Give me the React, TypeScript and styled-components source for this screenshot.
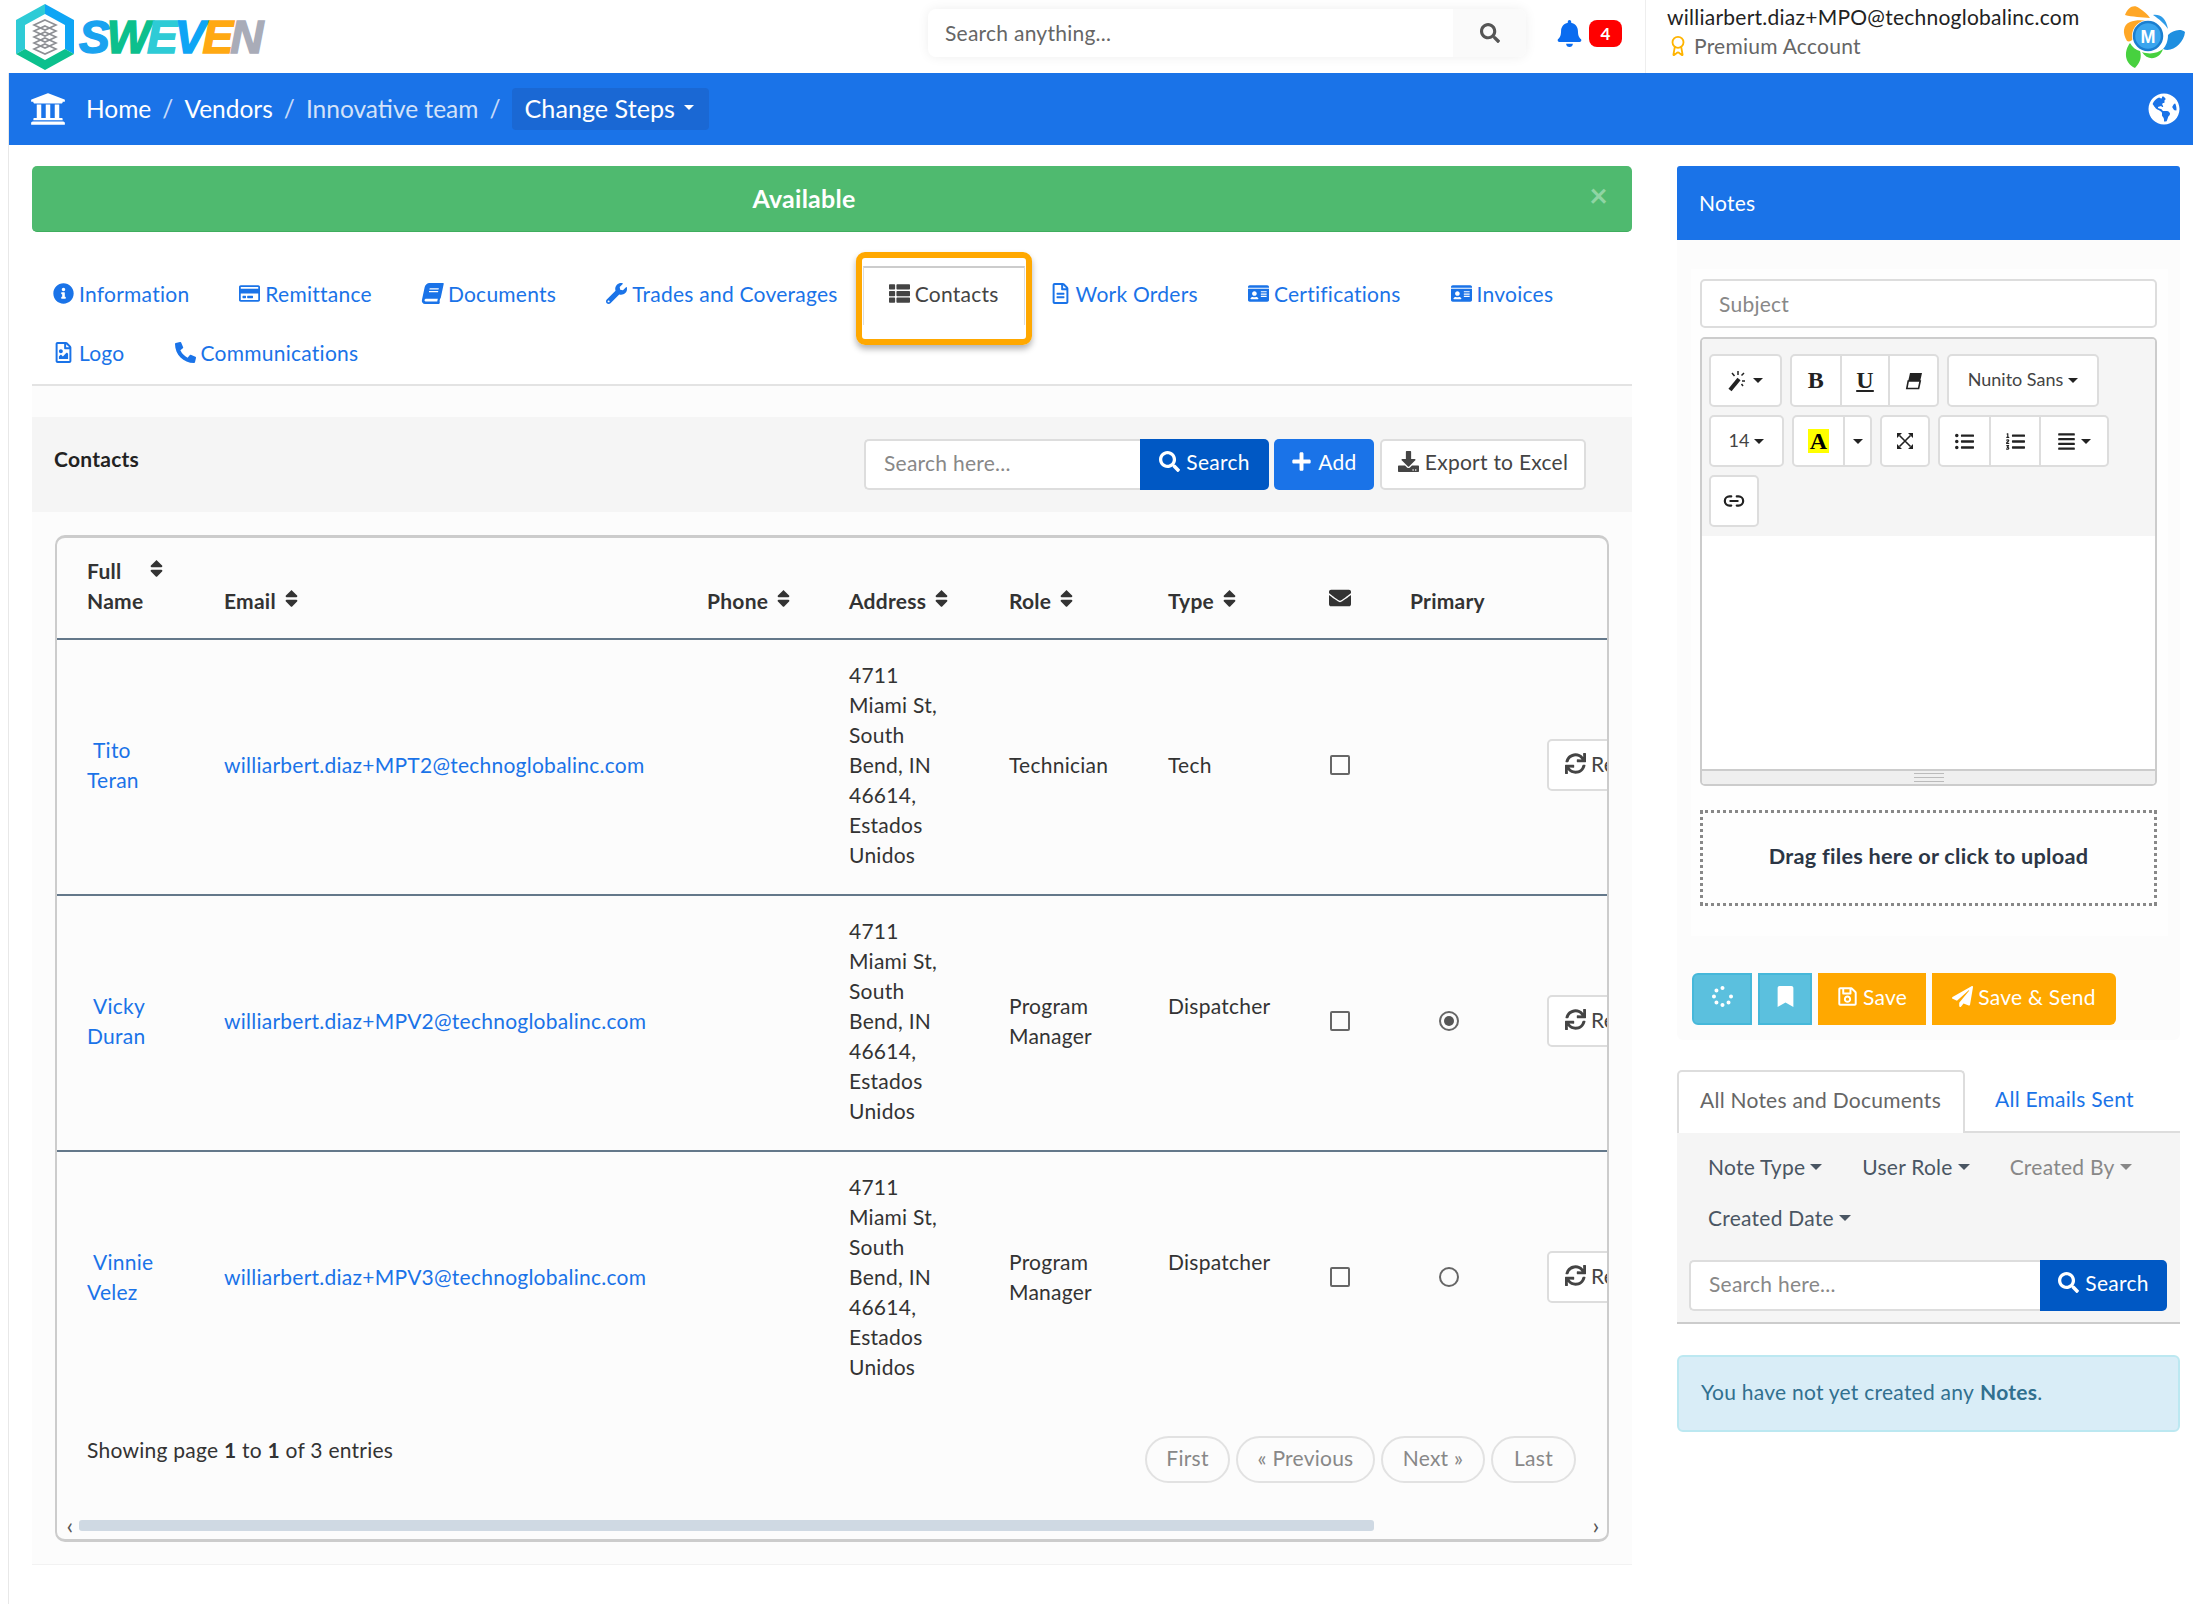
import React from 'react';
import styled, { createGlobalStyle } from 'styled-components';
import {
  FaAlignJustify,
  FaBell,
  FaBook,
  FaBookmark,
  FaDownload,
  FaEnvelope,
  FaGlobeAmericas,
  FaIdCard,
  FaInfoCircle,
  FaListOl,
  FaListUl,
  FaPaperPlane,
  FaPhoneAlt,
  FaPlus,
  FaRegCreditCard,
  FaRegFileAlt,
  FaRegFileImage,
  FaRegSave,
  FaSearch,
  FaSort,
  FaSpinner,
  FaSync,
  FaThList,
  FaUniversity,
  FaWrench,
} from 'react-icons/fa';
import { Award, Link2 } from 'lucide-react';

const BLUE = '#1a73e8';
const DARK_BLUE = '#0058c4';
const ORANGE = '#ffa800';

const GlobalStyle = createGlobalStyle`
  html, body {
    margin: 0;
    background: #fff;
    overflow: hidden;
  }
  body {
    font-family: Lato, "Noto Sans", sans-serif;
    font-size: 21px;
    letter-spacing: 0.25px;
    color: #333;
  }
  button { letter-spacing: inherit; }
  * { box-sizing: border-box; }
`;

const Page = styled.div`
  width: 2195px;
  height: 1604px;
`;

/* top header */
const Header = styled.header`
  display: flex;
  align-items: stretch;
  height: 73px;
`;

const Brand = styled.div`
  display: flex;
  align-items: center;
  gap: 5px;
  padding-left: 16px;
`;

const BrandWord = styled.div`
  display: flex;
  font-family: "Liberation Sans", sans-serif;
  font-weight: 700;
  font-style: italic;
  font-size: 46px;
  line-height: 1;
  letter-spacing: -3px;
  -webkit-text-stroke: 1.5px currentColor;
`;

const BrandLetter = styled.span<{ $color: string }>`
  color: ${(p) => p.$color};
`;

const SearchAnything = styled.div`
  display: flex;
  align-items: center;
  width: 598px;
  height: 48px;
  margin: 9px 0 0 auto;
  border-radius: 8px;
  box-shadow: 0 0 12px rgba(0, 0, 0, 0.07);
  overflow: hidden;
`;

const SearchAnythingText = styled.div`
  flex: 1;
  padding: 0 0 2px 17px;
  color: #666;
`;

const SearchAnythingIcon = styled.div`
  display: flex;
  align-items: center;
  justify-content: center;
  width: 73px;
  height: 100%;
  background: #fafafa;
  color: #555;
  font-size: 20px;
`;

const Notifications = styled.div`
  display: flex;
  align-items: center;
  gap: 6px;
  width: 119px;
  padding: 0 0 6px 30px;
  color: #0a6cf0;
  font-size: 27px;
`;

const CountBadge = styled.span`
  display: inline-flex;
  align-items: center;
  justify-content: center;
  width: 33px;
  height: 27px;
  border-radius: 8px;
  background: #f00;
  color: #fff;
  font-size: 17px;
  font-weight: 700;
`;

const UserArea = styled.div`
  display: flex;
  flex: none;
  justify-content: space-between;
  align-items: center;
  width: 550px;
  padding: 0 9px 0 21px;
  border-left: 1px solid #eee;
`;

const UserInfo = styled.div`
  padding-bottom: 10px;
`;

const UserEmail = styled.div`
  line-height: 28px;
  color: #222;
`;

const UserPlan = styled.div`
  display: flex;
  align-items: center;
  gap: 5px;
  line-height: 30px;
  color: #666;

  svg {
    color: #ffb400;
  }
`;

/* page body */
const Shell = styled.div`
  margin-left: 8px;
  height: 1531px;
  border-left: 1px solid #e8e8e8;
`;

const Crumbs = styled.nav`
  display: flex;
  align-items: center;
  height: 72px;
  margin-right: 2px;
  padding: 0 13px 0 21px;
  background: ${BLUE};
  color: #fff;
  font-size: 24.5px;
  letter-spacing: 0;
`;

const CrumbHomeIcon = styled.span`
  display: flex;
  margin-right: 20px;
  font-size: 36px;
`;

const Crumb = styled.span<{ $muted?: boolean }>`
  padding-bottom: 2px;
  color: ${(p) => (p.$muted ? '#d3e2f9' : '#fff')};
`;

const CrumbSlash = styled.span`
  margin: 0 11px;
  padding-bottom: 2px;
  color: #c6dafa;
`;

const StepsButton = styled.button`
  display: flex;
  align-items: center;
  gap: 9px;
  width: 197px;
  height: 42px;
  padding: 0 0 3px 13px;
  border: 0;
  border-radius: 4px;
  background: #1a68d4;
  color: #fff;
  font: inherit;
  font-size: 25.2px;
`;

const GlobeIcon = styled.span`
  display: flex;
  margin-left: auto;
  font-size: 32px;
`;

const Caret = styled.i<{ $size?: number }>`
  display: inline-block;
  flex: none;
  border-style: solid;
  border-color: currentColor transparent transparent;
  border-width: ${(p) => p.$size ?? 5}px ${(p) => p.$size ?? 5}px 0;
`;

const Content = styled.div`
  display: grid;
  grid-template-columns: 1600px 503px;
  column-gap: 45px;
  padding: 21px 0 0 23px;
`;

const MainColumn = styled.main``;

const StatusBanner = styled.div`
  position: relative;
  display: flex;
  align-items: center;
  justify-content: center;
  height: 66px;
  padding: 0 56px 2px 0;
  border-bottom: 1px solid #3fae5e;
  border-radius: 5px;
  background: #4fba6f;
  color: #fff;
  font-size: 25px;
  font-weight: 700;
`;

const BannerClose = styled.span`
  position: absolute;
  top: 13px;
  right: 24px;
  color: #8fd5a4;
  font-size: 32px;
  font-weight: 700;
  line-height: 1;
`;

const TabStrip = styled.div`
  display: flex;
  flex-wrap: wrap;
  padding: 34px 0 0;
  border-bottom: 2px solid #e3e3e3;
`;

const TabRowShift = styled.div`
  display: flex;
  flex-wrap: wrap;
  margin-left: -4px;
`;

const TabLink = styled.a<{ $active?: boolean }>`
  position: relative;
  display: flex;
  align-items: center;
  gap: 5px;
  height: 59px;
  padding: 0 25px 5px;
  color: ${(p) => (p.$active ? '#444' : BLUE)};
  white-space: nowrap;

  ${(p) =>
    p.$active &&
    `
    padding-bottom: 7px;
    border-top: 2px solid #ccc;
    border-left: 1px solid #ddd;
    border-right: 1px solid #ddd;
    &::after {
      content: '';
      position: absolute;
      inset: -16px -8px -20px -8px;
      border: 6px solid ${ORANGE};
      border-radius: 9px;
      box-shadow: 0 4px 6px rgba(0, 0, 0, 0.3);
    }
  `}
`;

const SlantedBook = styled(FaBook)`
  transform: skewX(-12deg);
`;

const ContactsCard = styled.section`
  height: 1179px;
  padding-top: 31px;
  background: #fcfcfc;
  border-bottom: 1px solid #f2f2f2;
`;

const ContactsHead = styled.div`
  display: flex;
  align-items: center;
  height: 95px;
  padding: 0 46px 0 22px;
  background: #f5f5f5;
`;

const ContactsTitle = styled.h2`
  margin: -12px auto 0 0;
  color: #222;
  font-size: 21px;
  font-weight: 700;
`;

const SearchField = styled.div<{ $width: number }>`
  display: flex;
  align-items: center;
  width: ${(p) => p.$width}px;
  height: 51px;
  padding: 0 0 5px 18px;
  border: 2px solid #ddd;
  border-right: 0;
  border-radius: 5px 0 0 5px;
  background: #fff;
  color: #888;
`;

const ActionButton = styled.button<{ $tone: 'dark' | 'blue' | 'plain'; $width: number; $gapLeft?: number }>`
  display: inline-flex;
  align-items: center;
  justify-content: center;
  gap: 6px;
  width: ${(p) => p.$width}px;
  height: 51px;
  margin-left: ${(p) => p.$gapLeft ?? 0}px;
  padding: 0 0 6px;
  border: ${(p) => (p.$tone === 'plain' ? '2px solid #ddd' : '0')};
  border-radius: ${(p) => (p.$tone === 'dark' ? '0 5px 5px 0' : '5px')};
  background: ${(p) => (p.$tone === 'dark' ? DARK_BLUE : p.$tone === 'blue' ? BLUE : '#fff')};
  color: ${(p) => (p.$tone === 'plain' ? '#444' : '#fff')};
  font: inherit;
`;

const TableBox = styled.div`
  height: 1007px;
  margin: 23px 23px 0 23px;
  border: 2px solid #ccc;
  border-top-width: 3px;
  border-bottom-width: 3px;
  border-radius: 10px;
  overflow: hidden;
`;

const Contacts = styled.table`
  width: 1690px;
  table-layout: fixed;
  border-collapse: collapse;
`;

const Column = styled.col<{ $width: number }>`
  width: ${(p) => p.$width}px;
`;

const HeadCell = styled.th<{ $pad?: number; $center?: boolean }>`
  height: 101px;
  padding: 0 0 22px ${(p) => p.$pad ?? 0}px;
  border-bottom: 2px solid #64788a;
  color: #333;
  font-size: 21px;
  font-weight: 700;
  line-height: 30px;
  text-align: ${(p) => (p.$center ? 'center' : 'left')};
  vertical-align: bottom;
`;

const SortMark = styled(FaSort)<{ $gap?: number }>`
  margin-left: ${(p) => p.$gap ?? 5}px;
  font-size: 21px;
`;

const MailMark = styled(FaEnvelope)`
  font-size: 22px;
`;

const Row = styled.tr`
  & + & td {
    border-top: 2px solid #64788a;
  }
`;

const Cell = styled.td<{ $pad?: number; $center?: boolean; $link?: boolean }>`
  padding: 20px 0 24px ${(p) => p.$pad ?? 0}px;
  color: ${(p) => (p.$link ? BLUE : '#333')};
  line-height: 30px;
  text-align: ${(p) => (p.$center ? 'center' : 'left')};
`;

const PersonName = styled.div`
  text-indent: 6px;
  width: 72px;
`;

const AddressBlock = styled.div`
  width: 96px;
`;

const CheckBox = styled.i`
  display: block;
  width: 20px;
  height: 20px;
  margin: 0 auto;
  border: 2px solid #666;
  border-radius: 2px;
`;

const RadioSlot = styled.div`
  display: flex;
  justify-content: center;
  width: 77px;
`;

const Radio = styled.i<{ $on?: boolean }>`
  display: flex;
  align-items: center;
  justify-content: center;
  width: 20px;
  height: 20px;
  border: 2px solid #666;
  border-radius: 50%;

  &::after {
    content: '';
    width: 10px;
    height: 10px;
    border-radius: 50%;
    background: ${(p) => (p.$on ? '#555' : 'transparent')};
  }
`;

const ResendButton = styled.button`
  display: inline-flex;
  align-items: center;
  gap: 5px;
  width: 190px;
  height: 52px;
  padding: 0 0 3px 16px;
  border: 2px solid #ddd;
  border-radius: 5px;
  background: #fff;
  color: #444;
  font: inherit;
`;

const TableFooter = styled.div`
  display: flex;
  justify-content: space-between;
  align-items: flex-start;
  padding: 30px 31px 0 30px;
`;

const EntriesNote = styled.div`
  line-height: 28px;
`;

const Pager = styled.div`
  display: flex;
  gap: 6px;
`;

const PagerButton = styled.span<{ $width: number }>`
  display: flex;
  align-items: center;
  justify-content: center;
  width: ${(p) => p.$width}px;
  height: 47px;
  padding-bottom: 4px;
  border: 2px solid #e2e2e2;
  border-radius: 24px;
  color: #888;
`;

const ScrollRail = styled.div`
  display: flex;
  align-items: center;
  height: 12px;
  margin-top: 36px;
  padding: 0 6px 0 8px;
  color: #555;
`;

const ScrollThumb = styled.i`
  width: 1295px;
  height: 11px;
  margin: 0 auto 0 4px;
  border-radius: 3px;
  background: #cfd9e3;
`;

const ScrollArrow = styled.span`
  width: 10px;
  font-size: 24px;
  line-height: 12px;
  text-align: center;
`;

/* notes column */
const NotesColumn = styled.aside``;

const NotesTitle = styled.div`
  display: flex;
  align-items: center;
  height: 74px;
  padding: 0 0 2px 22px;
  border-radius: 3px 3px 0 0;
  background: ${BLUE};
  color: #fff;
`;

const NotesBody = styled.div`
  padding: 29px 12px 15px 14px;
  border-radius: 0 0 6px 6px;
  background: #fcfcfc;
`;

const NotesInner = styled.div`
  padding: 10px 11px 30px 9px;
  background: #fefefe;
`;

const SubjectField = styled.div`
  display: flex;
  align-items: center;
  height: 49px;
  padding-left: 17px;
  border: 2px solid #ddd;
  border-radius: 5px;
  background: #fff;
  color: #888;
`;

const Editor = styled.div`
  height: 449px;
  margin-top: 9px;
  border: 2px solid #ccc;
  border-radius: 5px;
  overflow: hidden;
  background: #fff;
`;

const EditorTools = styled.div`
  display: flex;
  flex-direction: column;
  gap: 8px;
  height: 197px;
  padding: 15px 0 0 7px;
  background: #f5f5f5;
`;

const ToolRow = styled.div`
  display: flex;
  gap: 8px;
`;

const ToolGroup = styled.div`
  display: flex;
  border: 2px solid #ddd;
  border-radius: 5px;
  background: #fff;
  overflow: hidden;
`;

const ToolButton = styled.span<{ $width: number; $height?: number }>`
  display: flex;
  align-items: center;
  justify-content: center;
  gap: 5px;
  width: ${(p) => p.$width}px;
  height: ${(p) => p.$height ?? 49}px;
  color: #222;
  font-size: 19px;

  & + & {
    border-left: 2px solid #ddd;
  }
`;

const ToolText = styled.span`
  padding-bottom: 3px;
  color: #444;
  font-size: 18px;
  letter-spacing: 0;
`;

const SerifLetter = styled.span<{ $underline?: boolean }>`
  font-family: "Liberation Serif", serif;
  font-size: 24px;
  font-weight: 700;
  text-decoration: ${(p) => (p.$underline ? 'underline' : 'none')};
`;

const HighlightLetter = styled(SerifLetter)`
  padding: 0 2px;
  background: #ff0;
  color: #000;
  line-height: 24px;
`;

const EditorArea = styled.div`
  height: 233px;
  background: #fff;
`;

const EditorGrip = styled.div`
  display: flex;
  align-items: center;
  justify-content: center;
  height: 15px;
  border-top: 2px solid #ccc;
  background: #efefef;

  &::after {
    content: '';
    width: 30px;
    height: 7px;
    border-top: 1px solid #bbb;
    border-bottom: 1px solid #bbb;
    background: linear-gradient(#bbb, #bbb) center / 100% 1px no-repeat;
  }
`;

const DropZone = styled.div`
  display: flex;
  align-items: center;
  justify-content: center;
  height: 96px;
  margin-top: 24px;
  padding-bottom: 4px;
  border: 3px dotted #888;
  color: #2c3645;
  font-size: 21.7px;
  font-weight: 700;
`;

const SaveBar = styled.div`
  display: flex;
  gap: 6px;
  margin: 37px 0 0 1px;
`;

const SaveButton = styled.button<{ $tone: 'info' | 'warn'; $width: number; $round?: 'left' | 'right' }>`
  display: inline-flex;
  align-items: center;
  justify-content: center;
  gap: 5px;
  width: ${(p) => p.$width}px;
  height: 52px;
  padding: 0 0 5px;
  border: ${(p) => (p.$tone === 'info' ? '2px solid #46b8da' : '0')};
  border-radius: ${(p) => (p.$round === 'left' ? '6px 0 0 6px' : p.$round === 'right' ? '0 6px 6px 0' : '0')};
  background: ${(p) => (p.$tone === 'info' ? '#5bc0de' : ORANGE)};
  color: #fff;
  font: inherit;
`;

const NoteTabs = styled.div`
  display: flex;
  height: 63px;
  margin-top: 30px;
  border-bottom: 2px solid #ddd;
`;

const NoteTab = styled.div<{ $active?: boolean }>`
  display: flex;
  align-items: center;
  height: ${(p) => (p.$active ? '63px' : '61px')};
  padding: 0 ${(p) => (p.$active ? '21px' : '30px')} ${(p) => (p.$active ? '6px' : '4px')};
  width: ${(p) => (p.$active ? '288px' : 'auto')};
  border: ${(p) => (p.$active ? '2px solid #ddd' : '0')};
  border-bottom: 0;
  border-radius: 5px 5px 0 0;
  background: #fff;
  color: ${(p) => (p.$active ? '#666' : BLUE)};
  white-space: nowrap;
`;

const NoteFilters = styled.div`
  padding: 9px 12px 11px;
  border-bottom: 2px solid #ccc;
  background: #f5f5f5;
`;

const FilterWrap = styled.div`
  display: flex;
  flex-wrap: wrap;
  gap: 0 40px;
  padding-left: 19px;
`;

const FilterItem = styled.div<{ $muted?: boolean }>`
  display: flex;
  align-items: center;
  gap: 5px;
  height: 51px;
  padding-bottom: 2px;
  color: ${(p) => (p.$muted ? '#888' : '#4a5663')};
`;

const NoteSearch = styled.div`
  display: flex;
  margin-top: 16px;
`;

const EmptyNotes = styled.div`
  display: flex;
  align-items: center;
  height: 77px;
  margin-top: 31px;
  padding: 0 0 4px 22px;
  border: 2px solid #bce8f1;
  border-radius: 6px;
  background: #d9edf7;
  color: #31708f;
`;

const EmptyStrong = styled.strong`
  margin-left: 6px;
`;

function BrandMark() {
  return (
    <svg width="58" height="66" viewBox="0 0 58 66" aria-hidden="true">
      <polygon points="29,0 0,16 0,50 9,45 9,21 29,10" fill="#2ecbd6" />
      <polygon points="29,0 58,16 58,50 49,45 49,21 29,10" fill="#0ea5f5" />
      <polygon points="0,50 29,66 58,50 49,45 29,56 9,45" fill="#0cc08d" />
      <g fill="none" stroke="#8d8f94" strokeWidth="1.6">
        <polygon points="29,16 40,21 29,26 18,21" />
        <polygon points="29,22 40,27 29,32 18,27" />
        <polygon points="29,28 40,33 29,38 18,33" />
        <polygon points="29,34 40,39 29,44 18,39" />
        <polygon points="29,40 40,45 29,50 18,45" />
      </g>
    </svg>
  );
}

function AccountMark() {
  return (
    <svg width="64" height="64" viewBox="0 0 64 64" aria-hidden="true">
      <path d="M3 10 C6 2 12 -1 17 3 C22 6 26 10 28 13 C20 12 10 12 3 10 Z" fill="#ffa726" />
      <path d="M5 36 C0 28 1 20 8 17 C13 15 20 15 26 16 C16 18 12 24 12 33 C10 36 7 37 5 36 Z" fill="#ffa726" />
      <path d="M31 10 C38 9 44 13 46 24 C43 19 37 14 31 10 Z" fill="#2d9be8" />
      <path d="M41 44 C50 48 62 38 63 27 C58 23 50 26 46 30 C46 36 44 41 41 44 Z" fill="#1f8fe0" />
      <path d="M8 38 C2 46 2 58 13 63 C18 58 20 52 18 46 C14 45 10 42 8 38 Z" fill="#47d13f" />
      <path d="M20 47 C28 50 36 48 41 44 C38 54 26 57 20 47 Z" fill="#47d13f" />
      <circle cx="26" cy="31" r="16" fill="#fff" />
      <circle cx="26" cy="31" r="14" fill="#3aa5ee" stroke="#1b7fd0" strokeWidth="2.5" />
      <text x="26" y="37.5" textAnchor="middle" fontFamily="Liberation Sans, sans-serif" fontSize="18" fontWeight="700" fill="#fff">
        M
      </text>
    </svg>
  );
}

function WandGlyph() {
  return (
    <svg width="20" height="22" viewBox="0 0 20 22" aria-hidden="true">
      <path d="M2 20 L11 9" stroke="#222" strokeWidth="4" />
      <path d="M10 1 V5 M4 3 L6.5 6 M16 3 L13.5 5.5 M14 11 H17 M15 16 L13.5 14" stroke="#222" strokeWidth="1.5" />
    </svg>
  );
}

function EraserGlyph() {
  return (
    <svg width="18" height="18" viewBox="0 0 18 18" aria-hidden="true">
      <path d="M5 1 H17 L15.2 9 H3.2 Z" fill="#222" />
      <path d="M3.2 9 H15.2 L13.6 16.5 H1.8 Z" fill="#fff" stroke="#222" strokeWidth="1.6" />
    </svg>
  );
}

function ExpandGlyph() {
  return (
    <svg width="18" height="18" viewBox="0 0 18 18" aria-hidden="true">
      <path d="M3.5 3.5 L14.5 14.5 M14.5 3.5 L3.5 14.5" stroke="#222" strokeWidth="1.6" />
      <path d="M1 1 H6 L1 6 Z M17 1 H12 L17 6 Z M1 17 H6 L1 12 Z M17 17 H12 L17 12 Z" fill="#222" />
    </svg>
  );
}

const tabs = [
  { label: 'Information', icon: <FaInfoCircle /> },
  { label: 'Remittance', icon: <FaRegCreditCard /> },
  { label: 'Documents', icon: <SlantedBook /> },
  { label: 'Trades and Coverages', icon: <FaWrench /> },
  { label: 'Contacts', icon: <FaThList />, active: true },
  { label: 'Work Orders', icon: <FaRegFileAlt /> },
  { label: 'Certifications', icon: <FaIdCard /> },
  { label: 'Invoices', icon: <FaIdCard /> },
  { label: 'Logo', icon: <FaRegFileImage /> },
  { label: 'Communications', icon: <FaPhoneAlt /> },
];

const ADDRESS = '4711 Miami St, South Bend, IN 46614, Estados Unidos';

const people = [
  { name: 'Tito Teran', email: 'williarbert.diaz+MPT2@technoglobalinc.com', role: 'Technician', type: 'Tech', primary: null },
  { name: 'Vicky Duran', email: 'williarbert.diaz+MPV2@technoglobalinc.com', role: 'Program Manager', type: 'Dispatcher', primary: true },
  { name: 'Vinnie Velez', email: 'williarbert.diaz+MPV3@technoglobalinc.com', role: 'Program Manager', type: 'Dispatcher', primary: false },
];

const brandLetters: [string, string][] = [
  ['S', '#1aa3f0'],
  ['W', '#0cc08d'],
  ['E', '#2ecbd6'],
  ['V', '#0ea5f5'],
  ['E', '#ffa912'],
  ['N', '#a9acb8'],
];

export default function App() {
  return (
    <Page>
      <GlobalStyle />
      <Header>
        <Brand>
          <BrandMark />
          <BrandWord>
            {brandLetters.map(([letter, color], i) => (
              <BrandLetter key={i} $color={color}>
                {letter}
              </BrandLetter>
            ))}
          </BrandWord>
        </Brand>
        <SearchAnything>
          <SearchAnythingText>Search anything...</SearchAnythingText>
          <SearchAnythingIcon>
            <FaSearch />
          </SearchAnythingIcon>
        </SearchAnything>
        <Notifications>
          <FaBell />
          <CountBadge>4</CountBadge>
        </Notifications>
        <UserArea>
          <UserInfo>
            <UserEmail>williarbert.diaz+MPO@technoglobalinc.com</UserEmail>
            <UserPlan>
              <Award size={22} />
              Premium Account
            </UserPlan>
          </UserInfo>
          <AccountMark />
        </UserArea>
      </Header>

      <Shell>
        <Crumbs>
          <CrumbHomeIcon>
            <FaUniversity />
          </CrumbHomeIcon>
          <Crumb>Home</Crumb>
          <CrumbSlash>/</CrumbSlash>
          <Crumb>Vendors</Crumb>
          <CrumbSlash>/</CrumbSlash>
          <Crumb $muted>Innovative team</Crumb>
          <CrumbSlash>/</CrumbSlash>
          <StepsButton>
            Change Steps <Caret />
          </StepsButton>
          <GlobeIcon>
            <FaGlobeAmericas />
          </GlobeIcon>
        </Crumbs>

        <Content>
          <MainColumn>
            <StatusBanner>
              Available
              <BannerClose>×</BannerClose>
            </StatusBanner>
            <TabStrip>
              <TabRowShift>
                {tabs.map((tab) => (
                  <TabLink key={tab.label} $active={tab.active}>
                    {tab.icon}
                    {tab.label}
                  </TabLink>
                ))}
              </TabRowShift>
            </TabStrip>

            <ContactsCard>
              <ContactsHead>
                <ContactsTitle>Contacts</ContactsTitle>
                <SearchField $width={276}>Search here...</SearchField>
                <ActionButton $tone="dark" $width={129}>
                  <FaSearch /> Search
                </ActionButton>
                <ActionButton $tone="blue" $width={100} $gapLeft={5}>
                  <FaPlus /> Add
                </ActionButton>
                <ActionButton $tone="plain" $width={206} $gapLeft={6}>
                  <FaDownload /> Export to Excel
                </ActionButton>
              </ContactsHead>

              <TableBox>
                <Contacts>
                  <colgroup>
                    <Column $width={167} />
                    <Column $width={483} />
                    <Column $width={142} />
                    <Column $width={160} />
                    <Column $width={159} />
                    <Column $width={132} />
                    <Column $width={80} />
                    <Column $width={137} />
                    <Column $width={230} />
                  </colgroup>
                  <thead>
                    <tr>
                      <HeadCell $pad={30}>
                        Full
                        <SortMark $gap={25} />
                        <br />
                        Name
                      </HeadCell>
                      <HeadCell>
                        Email
                        <SortMark />
                      </HeadCell>
                      <HeadCell>
                        Phone
                        <SortMark />
                      </HeadCell>
                      <HeadCell>
                        Address
                        <SortMark />
                      </HeadCell>
                      <HeadCell>
                        Role
                        <SortMark />
                      </HeadCell>
                      <HeadCell>
                        Type
                        <SortMark />
                      </HeadCell>
                      <HeadCell $center>
                        <MailMark />
                      </HeadCell>
                      <HeadCell $pad={30}>Primary</HeadCell>
                      <HeadCell />
                    </tr>
                  </thead>
                  <tbody>
                    {people.map((person) => (
                      <Row key={person.email}>
                        <Cell $pad={30} $link>
                          <PersonName>{person.name}</PersonName>
                        </Cell>
                        <Cell $link>{person.email}</Cell>
                        <Cell />
                        <Cell>
                          <AddressBlock>{ADDRESS}</AddressBlock>
                        </Cell>
                        <Cell>
                          <AddressBlock>{person.role}</AddressBlock>
                        </Cell>
                        <Cell>
                          {person.type}
                          {person.type === 'Dispatcher' && (
                            <>
                              <br />
                              &nbsp;
                            </>
                          )}
                        </Cell>
                        <Cell $center>
                          <CheckBox />
                        </Cell>
                        <Cell $pad={30}>
                          {person.primary !== null && (
                            <RadioSlot>
                              <Radio $on={person.primary} />
                            </RadioSlot>
                          )}
                        </Cell>
                        <Cell $pad={30}>
                          <ResendButton>
                            <FaSync /> Resend
                          </ResendButton>
                        </Cell>
                      </Row>
                    ))}
                  </tbody>
                </Contacts>
                <TableFooter>
                  <EntriesNote>
                    Showing page <strong>1</strong> to <strong>1</strong> of 3 entries
                  </EntriesNote>
                  <Pager>
                    <PagerButton $width={85}>First</PagerButton>
                    <PagerButton $width={139}>« Previous</PagerButton>
                    <PagerButton $width={104}>Next »</PagerButton>
                    <PagerButton $width={85}>Last</PagerButton>
                  </Pager>
                </TableFooter>
                <ScrollRail>
                  <ScrollArrow>‹</ScrollArrow>
                  <ScrollThumb />
                  <ScrollArrow>›</ScrollArrow>
                </ScrollRail>
              </TableBox>
            </ContactsCard>
          </MainColumn>

          <NotesColumn>
            <NotesTitle>Notes</NotesTitle>
            <NotesBody>
              <NotesInner>
                <SubjectField>Subject</SubjectField>
                <Editor>
                  <EditorTools>
                    <ToolRow>
                      <ToolGroup>
                        <ToolButton $width={69}>
                          <WandGlyph />
                          <Caret />
                        </ToolButton>
                      </ToolGroup>
                      <ToolGroup>
                        <ToolButton $width={48}>
                          <SerifLetter>B</SerifLetter>
                        </ToolButton>
                        <ToolButton $width={48}>
                          <SerifLetter $underline>U</SerifLetter>
                        </ToolButton>
                        <ToolButton $width={49}>
                          <EraserGlyph />
                        </ToolButton>
                      </ToolGroup>
                      <ToolGroup>
                        <ToolButton $width={148}>
                          <ToolText>Nunito Sans</ToolText>
                          <Caret />
                        </ToolButton>
                      </ToolGroup>
                    </ToolRow>
                    <ToolRow>
                      <ToolGroup>
                        <ToolButton $width={71} $height={48}>
                          <ToolText>14</ToolText>
                          <Caret />
                        </ToolButton>
                      </ToolGroup>
                      <ToolGroup>
                        <ToolButton $width={49} $height={48}>
                          <HighlightLetter>A</HighlightLetter>
                        </ToolButton>
                        <ToolButton $width={27} $height={48}>
                          <Caret />
                        </ToolButton>
                      </ToolGroup>
                      <ToolGroup>
                        <ToolButton $width={46} $height={48}>
                          <ExpandGlyph />
                        </ToolButton>
                      </ToolGroup>
                      <ToolGroup>
                        <ToolButton $width={49} $height={48}>
                          <FaListUl />
                        </ToolButton>
                        <ToolButton $width={50} $height={48}>
                          <FaListOl />
                        </ToolButton>
                        <ToolButton $width={68} $height={48}>
                          <FaAlignJustify />
                          <Caret />
                        </ToolButton>
                      </ToolGroup>
                    </ToolRow>
                    <ToolRow>
                      <ToolGroup>
                        <ToolButton $width={46} $height={48}>
                          <Link2 size={22} strokeWidth={2.4} />
                        </ToolButton>
                      </ToolGroup>
                    </ToolRow>
                  </EditorTools>
                  <EditorArea />
                  <EditorGrip />
                </Editor>
                <DropZone>Drag files here or click to upload</DropZone>
              </NotesInner>
              <SaveBar>
                <SaveButton $tone="info" $width={60} $round="left">
                  <FaSpinner />
                </SaveButton>
                <SaveButton $tone="info" $width={54}>
                  <FaBookmark />
                </SaveButton>
                <SaveButton $tone="warn" $width={108}>
                  <FaRegSave /> Save
                </SaveButton>
                <SaveButton $tone="warn" $width={184} $round="right">
                  <FaPaperPlane /> Save &amp; Send
                </SaveButton>
              </SaveBar>
            </NotesBody>

            <NoteTabs>
              <NoteTab $active>All Notes and Documents</NoteTab>
              <NoteTab>All Emails Sent</NoteTab>
            </NoteTabs>
            <NoteFilters>
              <FilterWrap>
                <FilterItem>
                  Note Type <Caret $size={6} />
                </FilterItem>
                <FilterItem>
                  User Role <Caret $size={6} />
                </FilterItem>
                <FilterItem $muted>
                  Created By <Caret $size={6} />
                </FilterItem>
                <FilterItem>
                  Created Date <Caret $size={6} />
                </FilterItem>
              </FilterWrap>
              <NoteSearch>
                <SearchField $width={351}>Search here...</SearchField>
                <ActionButton $tone="dark" $width={127}>
                  <FaSearch /> Search
                </ActionButton>
              </NoteSearch>
            </NoteFilters>
            <EmptyNotes>
              You have not yet created any <EmptyStrong>Notes</EmptyStrong>.
            </EmptyNotes>
          </NotesColumn>
        </Content>
      </Shell>
    </Page>
  );
}
